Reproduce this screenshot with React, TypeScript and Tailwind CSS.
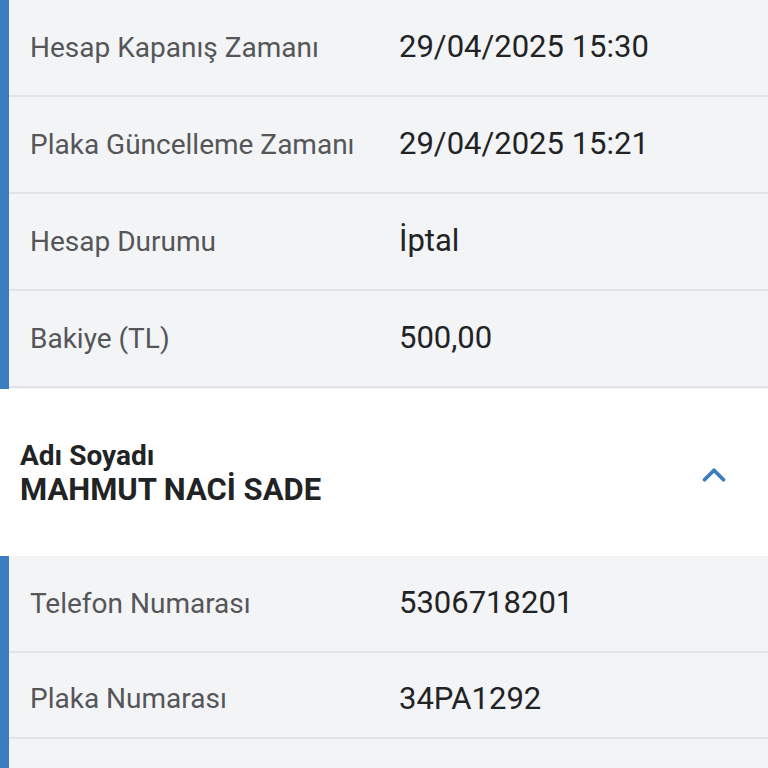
import { ChevronUp } from 'lucide-react'

const topRows = [
  { label: 'Hesap Kapanış Zamanı', value: '29/04/2025 15:30' },
  { label: 'Plaka Güncelleme Zamanı', value: '29/04/2025 15:21' },
  { label: 'Hesap Durumu', value: 'İptal' },
  { label: 'Bakiye (TL)', value: '500,00' }
]

const bottomRows = [
  { label: 'Telefon Numarası', value: '5306718201' },
  { label: 'Plaka Numarası', value: '34PA1292' }
]

const Row = ({ label, value, short }: { label: string; value: string; short?: boolean }) => (
  <div className={`flex items-center border-b-2 border-[#e2e3e6] ${short ? 'h-[86px] pt-[8px]' : 'h-[97px]'}`}>
    <div className="w-[390px] pl-[21px] text-[28px] text-[#555659]">{label}</div>
    <div className="text-[31px] text-[#222325]">{value}</div>
  </div>
)

const App = () => {
  return (
    <div
      className="w-[768px] h-[768px] overflow-hidden bg-white"
      style={{ fontFamily: 'Roboto, "Noto Sans", sans-serif' }}
    >
      {/* Account details */}
      <div className="flex bg-[#f3f4f6] h-[389px]">
        <div className="w-[9px] bg-[#3b7dbf]" />
        <div className="flex-1">
          {topRows.map((r) => (
            <Row key={r.label} label={r.label} value={r.value} />
          ))}
        </div>
      </div>

      {/* Owner header */}
      <div className="flex items-center justify-between h-[167px] pl-5 pr-[35px]">
        <div className="pt-[2px]">
          <p className="text-[28px] font-bold text-[#222325] leading-[32px]">Adı Soyadı</p>
          <p className="text-[31px] font-bold text-[#222325] leading-[36px]">MAHMUT NACİ SADE</p>
        </div>
        <ChevronUp className="w-[38px] h-[38px] mt-[4px] text-[#3b7dbf]" strokeWidth={2.4} />
      </div>

      {/* Owner details */}
      <div className="flex bg-[#f3f4f6] h-[220px]">
        <div className="w-[9px] bg-[#3b7dbf]" />
        <div className="flex-1">
          <Row label={bottomRows[0].label} value={bottomRows[0].value} />
          <Row label={bottomRows[1].label} value={bottomRows[1].value} short />
        </div>
      </div>
    </div>
  )
}

export default App
